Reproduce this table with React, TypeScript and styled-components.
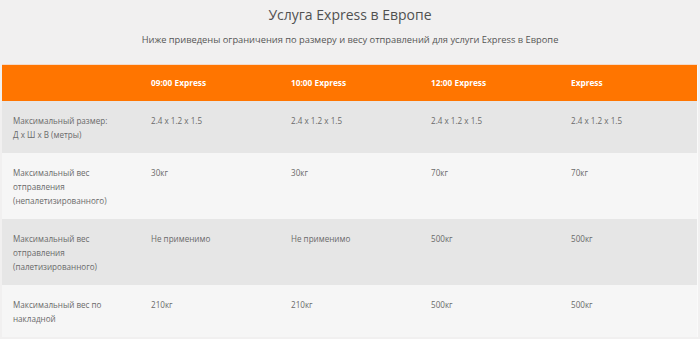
import React from "react";
import styled, { createGlobalStyle } from "styled-components";

const Global = createGlobalStyle`
  html, body { margin: 0; padding: 0; background: #f1f0f0; }
  body { font-family: "Open Sans", "Noto Sans", sans-serif; color: #555; }
`;

const Page = styled.div`
  width: 700px;
  height: 339px;
  overflow: hidden;
  background: #f1f0f0;
`;

const Intro = styled.header`
  display: flex;
  flex-direction: column;
  align-items: center;
  padding-top: 4px;
  height: 64px;
  box-sizing: border-box;
`;

const Title = styled.h1`
  margin: 0;
  font-size: 14px;
  font-weight: 400;
  line-height: 22px;
  color: #505050;
`;

const Subtitle = styled.p`
  margin: 7px 0 0;
  font-size: 9.3px;
  line-height: 14px;
  color: #555;
`;

const Table = styled.div`
  margin: 0 2px;
  border-top: 1px solid #f3d9c8;
  border-right: 1px solid #fafafa;
  display: grid;
  grid-template-columns: 139px 140px 140px 140px 1fr;
`;

const Row = styled.div<{ $tone: "head" | "dark" | "light" }>`
  display: contents;
  & > div {
    background: ${(p) =>
      p.$tone === "head" ? "#ff7500" : p.$tone === "dark" ? "#e6e6e6" : "#f6f6f6"};
    color: ${(p) => (p.$tone === "head" ? "#fff" : "#6a6a6a")};
    font-weight: ${(p) => (p.$tone === "head" ? 700 : 400)};
    font-size: ${(p) => (p.$tone === "head" ? "8.3px" : "8.1px")};
    line-height: 14px;
    padding: ${(p) => (p.$tone === "head" ? "11px 10px" : "12.5px 10px 11.5px")};
    min-height: 14px;
  }
`;

const Cell = styled.div`
  box-sizing: content-box;
`;

const LabelCell = styled(Cell)`
  padding-left: 11px !important;
  padding-right: 20px !important;
`;

const heads = ["09:00 Express", "10:00 Express", "12:00 Express", "Express"];

const rows: { label: string[]; values: string[] }[] = [
  {
    label: ["Максимальный размер:", "Д х Ш х В (метры)"],
    values: ["2.4 x 1.2 x 1.5", "2.4 x 1.2 x 1.5", "2.4 x 1.2 x 1.5", "2.4 x 1.2 x 1.5"],
  },
  {
    label: ["Максимальный вес", "отправления", "(непалетизированного)"],
    values: ["30кг", "30кг", "70кг", "70кг"],
  },
  {
    label: ["Максимальный вес", "отправления", "(палетизированного)"],
    values: ["Не применимо", "Не применимо", "500кг", "500кг"],
  },
  {
    label: ["Максимальный вес по", "накладной"],
    values: ["210кг", "210кг", "500кг", "500кг"],
  },
];

export default function App() {
  return (
    <Page>
      <Global />
      <Intro>
        <Title>Услуга Express в Европе</Title>
        <Subtitle>
          Ниже приведены ограничения по размеру и весу отправлений для услуги Express в Европе
        </Subtitle>
      </Intro>
      <Table>
        <Row $tone="head">
          <LabelCell />
          {heads.map((h) => (
            <Cell key={h}>{h}</Cell>
          ))}
        </Row>
        {rows.map((r, i) => (
          <Row key={i} $tone={i % 2 === 0 ? "dark" : "light"}>
            <LabelCell>
              {r.label.map((l, j) => (
                <React.Fragment key={j}>
                  {l}
                  {j < r.label.length - 1 && <br />}
                </React.Fragment>
              ))}
            </LabelCell>
            {r.values.map((v, j) => (
              <Cell key={j}>{v}</Cell>
            ))}
          </Row>
        ))}
      </Table>
    </Page>
  );
}
